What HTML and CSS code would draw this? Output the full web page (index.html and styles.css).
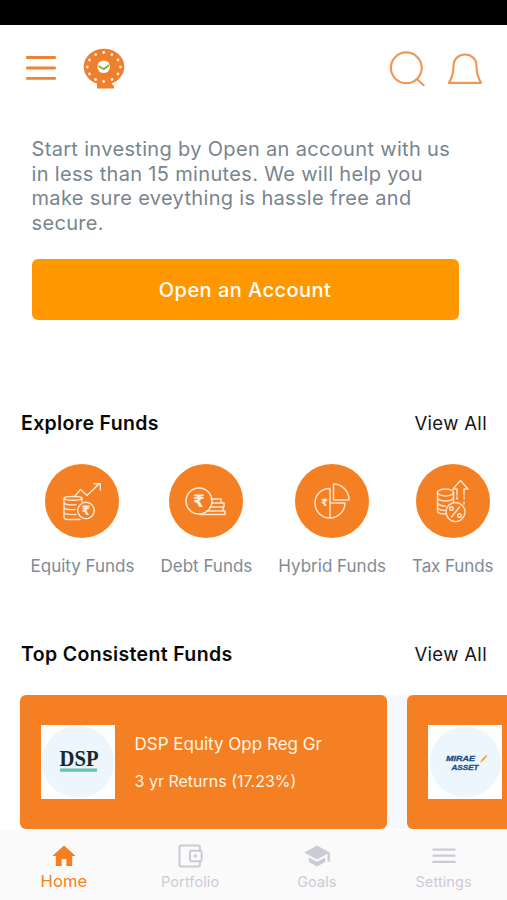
FILE: index.html
```html
<!DOCTYPE html>
<html lang="en">
<head>
<meta charset="utf-8">
<title>Funds</title>
<link rel="stylesheet" href="styles.css">
</head>
<body>
<div class="app">
  <div class="status"></div>
  <header class="header">
    <svg class="menu" width="32" height="28" viewBox="0 0 32 28" fill="none" stroke="#f08332" stroke-width="2.8" stroke-linecap="round"><path d="M2.3 3.5h27.4M2.3 14h27.4M2.3 24.4h27.4"/></svg>
    <svg class="logo" width="42" height="42" viewBox="0 0 42 42">
      <ellipse cx="21" cy="18.7" rx="20.3" ry="18" fill="#ef7f2d"/>
      <path d="M14 34h14.5q-.5 2 2.5 4v2.5H14z" fill="#ef7f2d"/>
      <circle cx="20.7" cy="18.7" r="6.3" fill="#fffdf8"/>
      <path d="M15.5 18l5.2 3 5.2-3.8" fill="none" stroke="#7eb343" stroke-width="2"/>
      <path d="M26 17l6-3.5" stroke="#c09834" stroke-width=".8"/>
      <g fill="#fff0dd"><circle cx="20.7" cy="4.5" r="1.4"/><circle cx="28.8" cy="6.7" r="1.4"/><circle cx="35" cy="12" r="1.4"/><circle cx="37.5" cy="19" r="1.4"/><circle cx="35" cy="26" r="1.4"/><circle cx="29" cy="31.5" r="1.4"/><circle cx="20.7" cy="33.5" r="1.4"/><circle cx="12.5" cy="31.5" r="1.4"/><circle cx="6.5" cy="26" r="1.4"/><circle cx="4.3" cy="19" r="1.4"/><circle cx="6.5" cy="12" r="1.4"/><circle cx="12.7" cy="6.7" r="1.4"/></g>
    </svg>
    <svg class="search" width="38" height="38" viewBox="0 0 38 38" fill="none" stroke="#f39754" stroke-width="2.2" stroke-linecap="round"><circle cx="17.3" cy="17.8" r="15.4"/><path d="M28 29l6.6 6.2"/></svg>
    <svg class="bell" width="36" height="34" viewBox="0 0 36 34" fill="none" stroke="#f39754" stroke-width="2.2" stroke-linejoin="round"><path d="M1.8 30.8h32.4C30.8 26 29.6 21 29.5 14 29.4 7 24.5 2.5 18 2.5S6.6 7 6.5 14C6.4 21 5.2 26 1.8 30.8z"/></svg>
  </header>
  <main>
    <section class="intro">
      <p class="intro-text">Start investing by Open an account with us<br>in less than 15 minutes. We will help you<br>make sure eveything is hassle free and<br>secure.</p>
      <button class="cta">Open an Account</button>
    </section>
    <div class="section-head"><h2 class="explore-title">Explore Funds</h2><a class="view-all">View All</a></div>
    <div class="categories">
      <div class="category equity">
        <svg class="disc" viewBox="0 0 74 74" fill="none" stroke="#fff" stroke-opacity=".8" stroke-width="1.4" stroke-linejoin="round" stroke-linecap="round">
          <path d="M19 34c0-2 18-2 18 0v4M19 34v19q0 2.5 4 2.5h12M19 34q1 2.3 9 2.3t9-2.3M19 38.5q1 3 12 2.2M19 43.5q1 2.5 11 2M19 48.5q1 2.5 12 2"/>
          <circle cx="41" cy="46.5" r="8.3"/><path d="M30 32l5.5-6.5 6.5 6L54 20m-5-.3h6.3V26"/>
          <text class="rupee" x="41" y="51.2" font-size="13">₹</text>
        </svg><span>Equity Funds</span>
      </div>
      <div class="category debt">
        <svg class="disc" viewBox="0 0 74 74" fill="none" stroke="#fff" stroke-opacity=".8" stroke-width="1.5" stroke-linejoin="round" stroke-linecap="round">
          <circle cx="30" cy="37" r="13"/><path d="M42 35h10v4H43M43 39h12v4H42M41 43h13v4H38M33 50.5h23V47H38M31 50.5h4"/>
          <text class="rupee" x="30" y="43" font-size="17">₹</text>
        </svg><span>Debt Funds</span>
      </div>
      <div class="category hybrid">
        <svg class="disc" viewBox="0 0 74 74" fill="none" stroke="#fff" stroke-opacity=".75" stroke-width="1.5" stroke-linejoin="round">
          <path d="M35 24.5C26 24.5 20 31 20 39s6 15 15 15zM35 39h15c0 8-7 15-15 15M38.5 36V20C47 20 54 27 54 36z"/>
          <text class="rupee" x="29.5" y="42" font-size="10">₹</text>
        </svg><span>Hybrid Funds</span>
      </div>
      <div class="category tax">
        <svg class="disc" viewBox="0 0 74 74" fill="none" stroke="#fff" stroke-opacity=".75" stroke-width="1.5" stroke-linejoin="round" stroke-linecap="round">
          <ellipse cx="29.5" cy="28.5" rx="8" ry="3.4"/><path d="M21.5 28.5v5q1 3.5 8 3.5t8-3.5v-5M21.5 35v12q0 3 8 3M21.5 39q2 3 8 3M21.5 43.5q2 3 7 3M37.5 34v4"/>
          <circle cx="39.5" cy="48" r="9.5"/><path d="M35.5 53l8-10"/><circle cx="35.5" cy="44.5" r="1.8"/><circle cx="43.5" cy="51.5" r="1.8"/>
          <path d="M41 31v-6h-4l7.5-8.5L52 25h-4v6"/><path stroke-dasharray="2 3" d="M41 33v5M48 33v8"/>
        </svg><span>Tax Funds</span>
      </div>
    </div>
    <div class="section-head top-head"><h2 class="top-title">Top Consistent Funds</h2><a class="view-all">View All</a></div>
    <div class="cards">
      <article class="card">
        <svg class="fund-logo" viewBox="0 0 74 74"><rect width="74" height="74" fill="#fff"/><circle cx="37" cy="37" r="36" fill="#edf6fd"/><text class="dsp" x="18.5" y="40.7" textLength="39" lengthAdjust="spacingAndGlyphs">DSP</text><path d="M19 45.2h37" stroke="#65c4ad" stroke-width="3.2"/></svg>
        <div class="card-copy"><div class="fund-name">DSP Equity Opp Reg Gr</div><div class="returns">3 yr Returns (17.23%)</div></div>
      </article>
      <article class="card">
        <svg class="fund-logo" viewBox="0 0 74 74"><rect width="74" height="74" fill="#fff"/><circle cx="37.5" cy="37" r="35.5" fill="#edf6fd"/><text class="mirae" x="18" y="36" textLength="29" lengthAdjust="spacingAndGlyphs">MIRAE</text><text class="mirae" x="23.5" y="45" textLength="27" lengthAdjust="spacingAndGlyphs">ASSET</text><path d="M52 38q1.5-5.5 7.5-8.5-1 4.5-7.5 8.5" fill="#f5a445"/></svg>
      </article>
    </div>
  </main>
  <nav class="tabs">
    <a class="tab active"><svg width="28" height="28" viewBox="0 0 24 24"><path d="M10 20.5V14.500h4v6h5v-8.500h3L12 3 2 12h3v8.500z" fill="currentColor"/></svg><span>Home</span></a>
    <a class="tab portfolio"><svg width="28" height="28" viewBox="0 0 24 24" fill="none" stroke="currentColor" stroke-width="1.7" stroke-linejoin="round"><rect x="3" y="3" width="17.500" height="18" rx="1.5"/><rect x="12" y="7.5" width="10" height="9" rx="1" fill="#fafafb"/><circle cx="16.5" cy="12" r="1" fill="currentColor" stroke-width="1"/></svg><span>Portfolio</span></a>
    <a class="tab goals"><svg width="28" height="28" viewBox="0 0 24 24" fill="currentColor"><path d="M5 13.2v4L12 21l7-3.8v-4L12 17zM12 3L1 9l11 6 9-4.9V17h2V9z"/></svg><span>Goals</span></a>
    <a class="tab settings"><svg width="28" height="28" viewBox="0 0 28 28" fill="none" stroke="currentColor" stroke-width="2.3"><path d="M2.5 7.6h23M2.5 13.7h23M2.5 19.8h23"/></svg><span>Settings</span></a>
  </nav>
</div>
</body>
</html>
```
FILE: styles.css
```css
* { box-sizing: border-box; }
body { margin: 0; background: #fff; font-family: Inter, "Liberation Sans", sans-serif; }
.app { width: 507px; height: 900px; overflow: hidden; display: flex; flex-direction: column; }
.status { height: 25px; background: #000; flex: none; }
.header { height: 85px; flex: none; display: flex; align-items: flex-start; padding: 22px 24px 0 25px; }
.menu { margin-top: 7px; }
.logo { margin: 1px 0 0 25.5px; }
.search { margin: 3px 0 0 auto; }
.bell { margin: 5px 0 0 20px; }
svg { display: block; flex: none; }
main { flex: 1; min-height: 0; }
.intro { padding: 27px 48px 0 31.5px; height: 288px; }
.intro-text { margin: 0 0 24px; font-size: 20px; line-height: 24.5px; color: #77858e; letter-spacing: .33px; white-space: nowrap; }
.cta { display: block; width: 427px; height: 61px; padding: 0; border: 0; border-radius: 6px; background: #ff9800; color: #fff; font: 500 20px Inter, sans-serif; letter-spacing: .45px; }
.section-head { display: flex; align-items: center; justify-content: space-between; height: 50px; padding: 0 20px 0 21px; }
h2 { margin: 0; font-size: 19.5px; font-weight: 600; color: #080808; letter-spacing: .35px; white-space: nowrap; }
.view-all { font-size: 18.5px; color: #151515; letter-spacing: .35px; }
.categories { display: flex; height: 181px; padding: 16px 0 0 30.5px; gap: 26px; }
.category { display: flex; flex-direction: column; align-items: center; flex: none; font-size: 17px; line-height: 22px; color: #7f8b94; white-space: nowrap; gap: 17px; }
.tax { letter-spacing: -.1px; }
.disc { width: 74px; height: 74px; border-radius: 50%; background: #f58023; }
.rupee { fill: #fff; fill-opacity: .85; stroke: none; font-family: "DejaVu Sans", sans-serif; font-weight: bold; text-anchor: middle; }
.cards { display: flex; gap: 20px; margin-top: 16px; margin-left: 20px; background: linear-gradient(90deg, #fff 0 50%, #f5f9fd 50%); }
.card { flex: none; width: 367px; height: 134px; border-radius: 6px; background: #f58023; display: flex; align-items: center; gap: 20px; padding: 0 20.5px; color: #fff4e6; }
.fund-logo { width: 74px; height: 74px; }
.dsp { font: bold 24px "Liberation Serif", serif; fill: #18282e; }
.mirae { font: italic 900 8px/1 "Liberation Sans", sans-serif; fill: #1b4b85; stroke: #1b4b85; stroke-width: .3px; }
.card-copy { white-space: nowrap; }
.fund-name { font-size: 17px; line-height: 24px; margin-bottom: 14px; }
.returns { font-size: 16px; line-height: 22px; }
.tabs { position: relative; flex: none; height: 70px; display: grid; grid-template-columns: repeat(4, 1fr); background: #fafafb; }
.tab { display: flex; flex-direction: column; align-items: center; padding-top: 12px; color: #c9ccd4; font-size: 14.5px; line-height: 24px; letter-spacing: .1px; }
.active { padding-left: 1px; color: #f58023; font-size: 16.5px; line-height: 22px; }
```
